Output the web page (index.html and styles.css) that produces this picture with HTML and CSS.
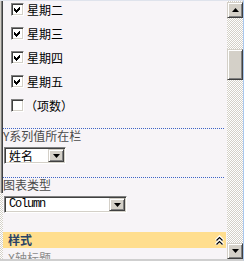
FILE: index.html
```html
<!DOCTYPE html>
<html lang="zh">
<head>
    <meta charset="UTF-8">
    <title>图表设置</title>
    <link rel="stylesheet" href="styles.css">
</head>
<body>

    <div class="frame">

        <!-- 左侧滚动条边缘 -->
        <div class="edge"><div class="edge-thumb"></div></div>

        <div class="panel">

            <!-- 系列选择 -->
            <div class="checks">
                <div class="check-row">
                    <span class="checkbox"><svg width="7" height="7" viewBox="0 0 7 7"><polygon points="0,2 2,4 6,0 6,3 2,7 0,5" fill="#000"/></svg></span>
                    <span>星期二</span>
                </div>
                <div class="check-row">
                    <span class="checkbox"><svg width="7" height="7" viewBox="0 0 7 7"><polygon points="0,2 2,4 6,0 6,3 2,7 0,5" fill="#000"/></svg></span>
                    <span>星期三</span>
                </div>
                <div class="check-row">
                    <span class="checkbox"><svg width="7" height="7" viewBox="0 0 7 7"><polygon points="0,2 2,4 6,0 6,3 2,7 0,5" fill="#000"/></svg></span>
                    <span>星期四</span>
                </div>
                <div class="check-row">
                    <span class="checkbox"><svg width="7" height="7" viewBox="0 0 7 7"><polygon points="0,2 2,4 6,0 6,3 2,7 0,5" fill="#000"/></svg></span>
                    <span>星期五</span>
                </div>
                <div class="check-row">
                    <span class="checkbox"></span>
                    <span class="paren">（项数）</span>
                </div>
            </div>

            <!-- Y系列 -->
            <div class="field">
                <div class="field-label">Y系列值所在栏</div>
                <div class="combo small">
                    <div class="combo-text">姓名</div>
                    <div class="combo-btn"><svg width="7" height="4" viewBox="0 0 7 4"><polygon points="0,0 7,0 3.5,4" fill="#000"/></svg></div>
                </div>
            </div>

            <!-- 图表类型 -->
            <div class="field">
                <div class="field-label">图表类型</div>
                <div class="combo wide">
                    <div class="combo-text mono">Column</div>
                    <div class="combo-btn"><svg width="7" height="4" viewBox="0 0 7 4"><polygon points="0,0 7,0 3.5,4" fill="#000"/></svg></div>
                </div>
            </div>

            <!-- 样式 -->
            <div class="style-band">
                <span>样式</span>
                <svg width="9" height="11" viewBox="0 0 9 11">
                    <polyline points="1,5.5 4.5,2 8,5.5" fill="none" stroke="#fff" stroke-width="3"/>
                    <polyline points="1,9.5 4.5,6 8,9.5" fill="none" stroke="#fff" stroke-width="3"/>
                    <polyline points="1.5,5.5 4.5,2.5 7.5,5.5" fill="none" stroke="#000" stroke-width="1.2"/>
                    <polyline points="1.5,9.5 4.5,6.5 7.5,9.5" fill="none" stroke="#000" stroke-width="1.2"/>
                </svg>
            </div>
            <div class="cut-label">X轴标题</div>

        </div>

        <!-- 右侧滚动条 -->
        <div class="vscroll">
            <div class="sb-btn"><svg width="7" height="4" viewBox="0 0 7 4"><polygon points="3.5,0 7,4 0,4" fill="#000"/></svg></div>
            <div class="sb-track"><div class="sb-thumb"></div></div>
            <div class="sb-btn"><svg width="7" height="4" viewBox="0 0 7 4"><polygon points="0,0 7,0 3.5,4" fill="#000"/></svg></div>
        </div>

    </div>

</body>
</html>
```

FILE: styles.css
```css
*{
    box-sizing: border-box;
}

body{
    margin: 0;
    font-family: "Noto Sans CJK SC", sans-serif;
    font-size: 12px;
}

.frame{
    width: 244px;
    height: 261px;
    display: flex;
    overflow: hidden;
    background: #f7f4f7;
    border-top: 1px solid #dfe3ec;
    border-right: 1px solid #a9c8f0;
    border-bottom: 2px solid #cfcfcf;
}

/* checker track */
.edge,
.vscroll{
    background-color: #fff;
    background-image: repeating-conic-gradient(#d4d0c8 0 25%, #fff 0 50%);
    background-size: 2px 2px;
}

.edge{
    width: 3px;
    flex: none;
}

.edge-thumb{
    height: 192px;
    background: linear-gradient(to right, #d4d0c8 0 1px, #808080 1px 2px, #404040 2px 3px);
}

.panel{
    flex: 1;
    min-width: 0;
    overflow: hidden;
}

.checks{
    display: flex;
    flex-direction: column;
    gap: 11px;
    padding: 2px 0 16px 8px;
}

.check-row{
    display: flex;
    align-items: center;
    gap: 3px;
    height: 13px;
    line-height: 13px;
    color: #000;
}

.paren{
    margin-left: -2px;
}

.checkbox{
    width: 13px;
    height: 13px;
    flex: none;
    display: flex;
    align-items: center;
    justify-content: center;
    background: #fff;
    border: 1px solid;
    border-color: #808080 #fff #fff #808080;
    box-shadow: inset 1px 1px #404040, inset -1px -1px #d4d0c8;
}

.checkbox svg{
    shape-rendering: crispEdges;
}

.field{
    border-top: 1px dotted #3f64c6;
    margin-right: 3px;
    padding-bottom: 13px;
}

.field-label{
    line-height: 14px;
    color: #4a4a4a;
    white-space: nowrap;
}

.combo{
    margin: 4px 0 0 1px;
    height: 17px;
    display: flex;
    padding: 1px;
    background: #fff;
    border: 1px solid;
    border-color: #808080 #fff #fff #808080;
    box-shadow: inset 1px 1px #404040, inset -1px -1px #d4d0c8;
}

.combo.small{
    width: 62px;
}

.combo.wide{
    width: 123px;
}

.combo-text{
    flex: 1;
    padding-left: 3px;
    line-height: 13px;
    color: #000;
}

.mono{
    font-family: "Liberation Mono", monospace;
    letter-spacing: -1.2px;
}

.combo-btn,
.sb-btn,
.sb-thumb{
    background: #d4d0c8;
    border: 1px solid;
    border-color: #d4d0c8 #404040 #404040 #d4d0c8;
    box-shadow: inset 1px 1px #fff, inset -1px -1px #808080;
}

.combo-btn{
    width: 16px;
    display: flex;
    align-items: center;
    justify-content: center;
}

.style-band{
    margin: 6px 1px 0 0;
    height: 16px;
    display: flex;
    align-items: center;
    justify-content: space-between;
    padding: 0 2px 0 5px;
    background: #ffde8e;
    color: #2a4468;
    font-weight: bold;
    line-height: 16px;
}

.cut-label{
    padding: 3px 0 0 5px;
    line-height: 14px;
    color: #8a8a8a;
}

.vscroll{
    width: 16px;
    flex: none;
    display: flex;
    flex-direction: column;
    padding-top: 1px;
}

.sb-btn{
    height: 16px;
    flex: none;
    display: flex;
    align-items: center;
    justify-content: center;
}

.sb-track{
    flex: 1;
    padding-top: 31px;
}

.sb-thumb{
    height: 31px;
}
```
